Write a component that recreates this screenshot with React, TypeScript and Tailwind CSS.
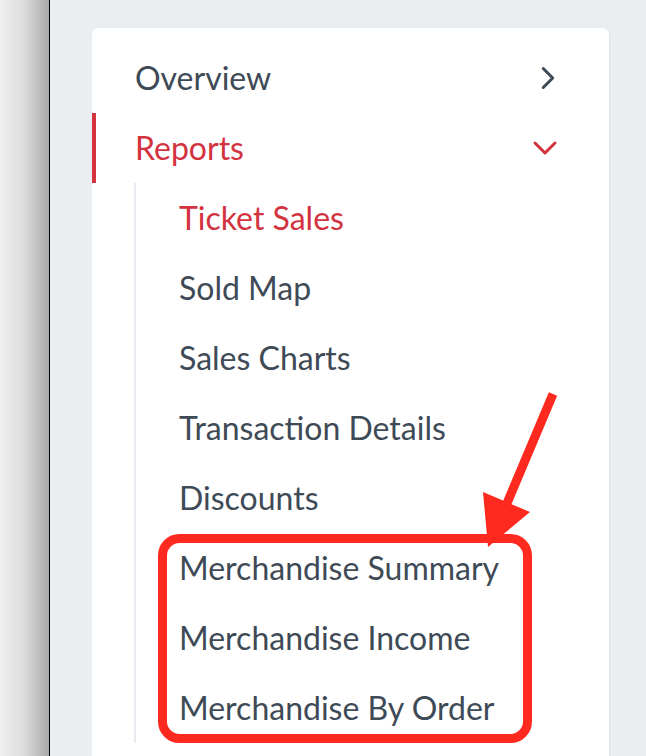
import { ChevronRight, ChevronDown } from 'lucide-react';

const subItems = [
  'Ticket Sales',
  'Sold Map',
  'Sales Charts',
  'Transaction Details',
  'Discounts',
  'Merchandise Summary',
  'Merchandise Income',
  'Merchandise By Order',
];

export default function App() {
  return (
    <div
      className="relative flex h-[756px] w-[646px] overflow-hidden bg-[#ebeef1]"
      style={{ fontFamily: 'Lato, "Open Sans", sans-serif' }}
    >
      {/* window edge on the left */}
      <div className="h-full w-[50px] shrink-0 border-r border-black bg-gradient-to-r from-[#f0f0f0] via-[#dcdcdc] to-[#a9a9a9]" />

      <div className="ml-[42px] mt-[28px] w-[517px] shrink-0 self-start rounded-md bg-white pt-[15px] pb-[30px] shadow-[1px_0_2px_rgba(0,0,0,0.06)]">
        <div className="flex h-[70px] items-center justify-between pl-[43px] pr-[42px] text-[32px] text-[#3e4a56]">
          <span>Overview</span>
          <ChevronRight className="h-[38px] w-[38px]" strokeWidth={1.9} />
        </div>

        <div className="flex h-[70px] items-center justify-between border-l-4 border-[#d3323f] pl-[39px] pr-[44px] text-[32px] text-[#d3323f]">
          <span>Reports</span>
          <ChevronDown className="h-[40px] w-[40px]" strokeWidth={1.8} />
        </div>

        <ul className="ml-[42px] border-l-2 border-[#e8ecf0]">
          {subItems.map((item, i) => (
            <li
              key={item}
              className={`flex h-[70px] items-center pl-[43px] text-[32px] ${
                i === 0 ? 'text-[#d3323f]' : 'text-[#3e4a56]'
              }`}
            >
              {item}
            </li>
          ))}
        </ul>
      </div>

      {/* annotation drawn over the screenshot */}
      <svg
        className="pointer-events-none absolute left-0 top-0"
        width="646"
        height="756"
        viewBox="0 0 646 756"
      >
        <rect
          x="162.5"
          y="538.5"
          width="365"
          height="200"
          rx="17"
          fill="none"
          stroke="#ff2a1f"
          strokeWidth="9"
        />
        <line x1="553" y1="394" x2="505" y2="508" stroke="#ff2a1f" strokeWidth="9" />
        <polygon points="488,547 483,492 530,512" fill="#ff2a1f" />
      </svg>
    </div>
  );
}
